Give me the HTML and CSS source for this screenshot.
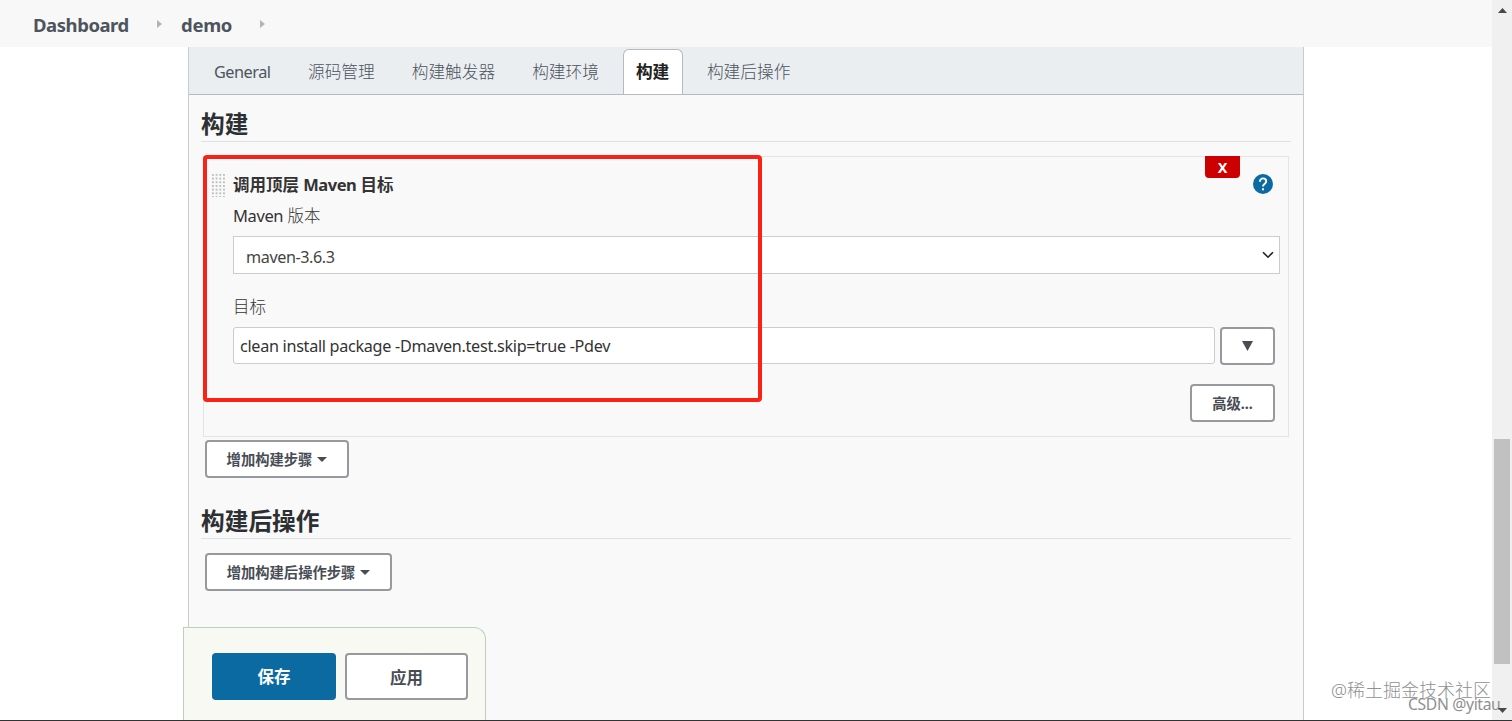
FILE: index.html
```html
<!DOCTYPE html>
<html lang="zh-CN">
<head>
<meta charset="utf-8">
<title>demo Config</title>
<link rel="stylesheet" href="styles.css">
</head>
<body>
<div class="viewport">
  <div class="page">
    <nav class="crumbs">
      <span class="crumb crumb-home">Dashboard</span>
      <svg class="crumb-arrow" width="5" height="8" viewBox="0 0 5 8"><path d="M0 0L5 4L0 8Z" fill="#b4b4b4"/></svg>
      <span class="crumb crumb-job">demo</span>
      <svg class="crumb-arrow" width="5" height="8" viewBox="0 0 5 8"><path d="M0 0L5 4L0 8Z" fill="#b4b4b4"/></svg>
    </nav>
    <main class="panel">
      <div class="tabs">
        <span class="tab tab-general">General</span>
        <span class="tab">源码管理</span>
        <span class="tab">构建触发器</span>
        <span class="tab">构建环境</span>
        <span class="tab tab-active">构建</span>
        <span class="tab">构建后操作</span>
      </div>
      <h2 class="section-title">构建</h2>
      <section class="step">
        <div class="grip"></div>
        <div class="step-body">
          <div class="step-title">调用顶层 <span class="latin-bold">Maven</span> 目标</div>
          <div class="label"><span class="latin">Maven</span> 版本</div>
          <div class="select"><span class="select-text">maven-3.6.3</span>
            <svg width="12" height="8" viewBox="0 0 12 8"><path d="M1 1.2L6 6.2L11 1.2" fill="none" stroke="#222" stroke-width="1.6"/></svg>
          </div>
          <div class="label label-goal">目标</div>
          <div class="goal-row">
            <div class="input"><span class="goal-text">clean install package -Dmaven.test.skip=true -Pdev</span></div>
            <div class="button expand"><svg width="11" height="10" viewBox="0 0 11 10"><path d="M0 0H11L5.5 10Z" fill="#484d52"/></svg></div>
          </div>
          <div class="advanced-row"><div class="button advanced"><span class="caption">高级...</span></div></div>
        </div>
        <div class="delete">X</div>
        <svg class="help" width="20" height="20" viewBox="0 0 20 20"><circle cx="10" cy="10" r="10" fill="#0b6aa2"/><path d="M6.9 7.7C6.9 5.7 8.2 4.4 10 4.4S13.2 5.7 13.2 7.4C13.2 9.6 10 9.9 10 12.5" fill="none" stroke="#fff" stroke-width="1.9"/><rect x="9" y="14.3" width="2" height="2" fill="#fff"/></svg>
        <div class="highlight"></div>
      </section>
      <div class="button add-step"><span class="caption">增加构建步骤</span><svg width="10" height="5" viewBox="0 0 10 5"><path d="M0 0H10L5 5Z" fill="#484d52"/></svg></div>
      <h2 class="section-title section-post">构建后操作</h2>
      <div class="button add-post"><span class="caption">增加构建后操作步骤</span><svg width="10" height="5" viewBox="0 0 10 5"><path d="M0 0H10L5 5Z" fill="#484d52"/></svg></div>
    </main>
    <div class="save-bar">
      <div class="save">保存</div>
      <div class="button apply">应用</div>
    </div>
  </div>
  <div class="scrollbar">
    <svg class="scroll-up" width="9" height="5" viewBox="0 0 9 5"><path d="M0 5L4.5 0L9 5Z" fill="#484848"/></svg>
    <div class="thumb"></div>
    <svg class="scroll-down" width="9" height="5" viewBox="0 0 9 5"><path d="M0 0H9L4.5 5Z" fill="#484848"/></svg>
  </div>
  <div class="mark mark-community">@稀土掘金技术社区</div>
  <div class="mark mark-author">CSDN @yitau</div>
  <div class="bottom-edge"></div>
</div>
</body>
</html>
```
FILE: styles.css
```css
* { box-sizing: border-box; }
body { margin: 0; background: #fff; color: #333; font-family: "Noto Sans", "Noto Sans CJK SC", sans-serif; }
svg { display: block; flex: none; }
.viewport { position: relative; display: flex; width: 1512px; height: 721px; overflow: hidden; }
.page { position: relative; width: 1492px; height: 721px; overflow: hidden; }
.crumbs { display: flex; height: 47px; align-items: center; padding: 0 0 0 33px; background: #f8f8f8; color: #4d545d; font-size: 18.5px; font-weight: 700; }
.crumb { line-height: 26px; padding-top: 2px; white-space: nowrap; }
.crumb-home { width: 124px; letter-spacing: -0.45px; }
.crumb-job { width: 79px; margin-left: 19px; letter-spacing: -0.3px; }
.panel { width: 1116px; height: 674px; margin-left: 188px; border: 1px solid #c8cbcf; border-width: 0 1px; background: #f9f9f9; }
.tabs { display: flex; height: 48px; padding: 2px 0 0 13px; background: #eaeef1; border-bottom: 1px solid #b5bac2; }
.tab { height: 45px; margin-right: 13px; padding: 0 12px; line-height: 46px; font-size: 16.7px; font-weight: 300; color: #4d545d; white-space: nowrap; }
.tab-general { width: 81px; font-size: 16.3px; font-weight: 400; letter-spacing: -0.5px; }
.tab-active { width: 60px; margin-right: 12px; margin-left: -1px; border: 1px solid #b5bac2; border-bottom: 0; border-radius: 6px 6px 0 0; background: #fff; color: #222; font-weight: 700; line-height: 44px; }
.section-title { height: 47px; margin: 0 12px; padding-top: 12px; border-bottom: 1px solid #dfe2e4; font-size: 23.7px; line-height: 34px; font-weight: 700; color: #2d3033; }
.step { position: relative; display: flex; width: 1086px; height: 281px; margin: 14px 0 0 14px; border: 1px solid #e4e4e4; }
.grip { flex: none; width: 14px; height: 24px; margin: 16px 8px 0 7px; background-image: radial-gradient(circle at 2px 2px, #bebebe 1px, transparent 1.3px); background-size: 3.7px 3.7px; }
.step-body { flex: none; width: 1047px; }
.step-title { height: 30px; margin-top: 13px; line-height: 30px; font-size: 16.5px; font-weight: 700; }
.latin-bold { letter-spacing: -0.5px; }
.label { height: 36px; line-height: 32px; font-size: 16.5px; font-weight: 300; }
.latin { font-weight: 400; letter-spacing: -0.4px; }
.select { display: flex; align-items: center; justify-content: space-between; height: 38px; padding: 0 5px 0 12px; background: #fff; border: 1px solid #ccc; font-size: 16.2px; }
.select-text { padding-top: 4px; letter-spacing: -0.42px; color: #444; }
.label-goal { height: 38px; margin-top: 15px; line-height: 35px; }
.goal-row { display: flex; gap: 5px; }
.input { display: flex; align-items: center; width: 982px; height: 37px; padding: 0 6px; border: 1px solid #ccc; border-radius: 3px; background: #fff; font-size: 16.2px; }
.goal-text { white-space: nowrap; letter-spacing: -0.3px; padding-top: 1px; }
.button { display: flex; align-items: center; justify-content: center; height: 38px; border: 2px solid #969a9e; border-radius: 4px; background: #fff; color: #484d55; font-size: 14.3px; font-weight: 700; white-space: nowrap; }
.caption { padding-bottom: 2px; }
.expand { width: 55px; }
.advanced-row { display: flex; justify-content: flex-end; padding-right: 5px; margin-top: 19px; }
.advanced { width: 85px; }
.delete { position: absolute; left: 1001px; top: -1px; width: 35px; height: 22px; border-radius: 0 0 4px 4px; background: #c00; color: #fff; font: 700 14.5px/22px "Noto Sans", sans-serif; text-align: center; }
.help { position: absolute; left: 1049px; top: 17px; }
.highlight { position: absolute; left: -1px; top: -2px; width: 559px; height: 247px; border: 4px solid #fb2114; border-radius: 4px; }
.add-step, .add-post { gap: 5px; margin: 3px 0 0 16px; width: 144px; }
.section-post { margin-top: 14px; }
.add-post { width: 187px; margin-top: 14px; }
.save-bar { position: absolute; left: 183px; top: 627px; display: flex; gap: 9px; width: 303px; height: 94px; padding: 25px 0 0 28px; border: 1px solid #bdd0c0; border-bottom: 0; border-radius: 0 12px 0 0; background: #f7f9f2; }
.save { width: 124px; height: 47px; border-radius: 4px; background: #0b6aa2; color: #fff; font-size: 16.5px; line-height: 48px; font-weight: 700; text-align: center; }
.apply { width: 123px; height: 47px; font-size: 16.5px; }
.scrollbar { display: flex; flex-direction: column; width: 20px; height: 721px; padding-left: 2px; background: #f0f0f0; }
.scroll-up { margin: 8px 0 0 4px; }
.thumb { width: 16px; height: 225px; margin-top: 426px; background: #c1c1c1; }
.scroll-down { position: relative; z-index: 2; margin: 44px 0 0 4px; }
.mark { position: absolute; z-index: 1; white-space: nowrap; color: #909090; }
.mark-community { left: 1331px; top: 677px; font-size: 18px; line-height: 26px; font-weight: 300; }
.mark-author { left: 1408px; top: 693px; font-size: 15.7px; line-height: 22px; letter-spacing: -0.35px; }
.bottom-edge { position: absolute; left: 0; right: 0; bottom: 0; height: 1px; background: #333; }
```
